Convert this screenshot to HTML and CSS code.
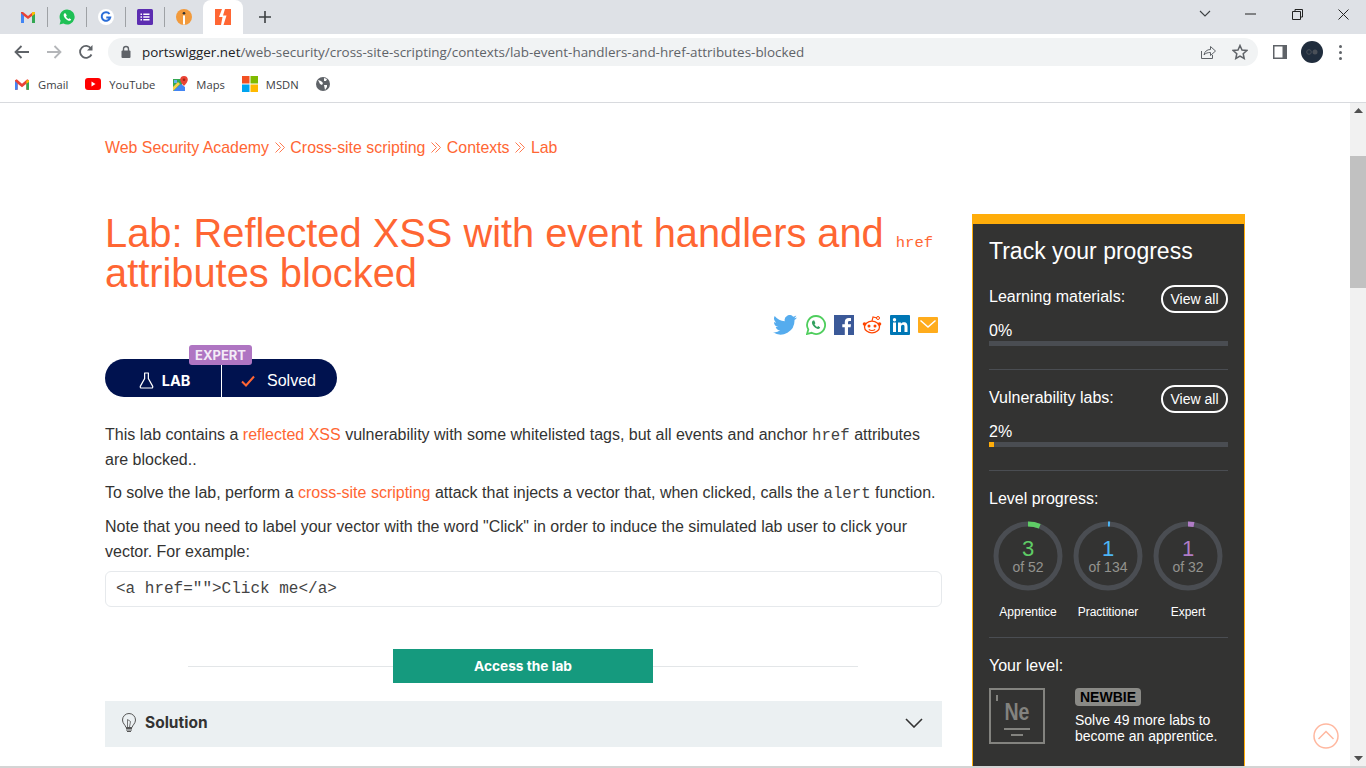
FILE: index.html
```html
<!DOCTYPE html>
<html lang="en">
<head>
	<meta charset="UTF-8">
	<title>Lab: Reflected XSS with event handlers and href attributes blocked</title>
	<link rel="stylesheet" href="styles.css">
</head>
<body>
	<div class="tabstrip">
		<div class="tabs">
			<div class="tab">
				<svg width="16" height="16" viewBox="0 0 16 16"><path d="M1 14V3l2 0 5 4 5-4h2v11h-3V7L8 10 4 7v7z" fill="#ea4335"/><path d="M1 14V4l3 3v7z" fill="#4285f4"/><path d="M15 14V4l-3 3v7z" fill="#34a853"/><path d="M12 3h3v2l-3 2z" fill="#fbbc04"/></svg>
			</div>
			<i class="tab-sep"></i>
			<div class="tab">
				<svg width="16" height="16" viewBox="0 0 16 16"><path d="M8 0.500a7.500 7.500 0 0 0-6.400 11.300L.6 15.500l3.800-1A7.500 7.500 0 1 0 8 .5z" fill="#1fc055"/><path d="M5.600 4.200c-.9.600-1.200 1.900-.6 3.300 1 2.100 2.500 3.500 4.500 4.200 1.300.4 2.300-.1 2.700-1.100l-1.800-1.300-.9.800c-1.100-.5-2-1.400-2.500-2.500l.8-.9-1-2.300z" fill="#fff"/></svg>
			</div>
			<i class="tab-sep"></i>
			<div class="tab">
				<svg width="16" height="16" viewBox="0 0 16 16"><circle cx="8" cy="8" r="8" fill="#fff"/><path d="M11.500 5a4.300 4.300 0 1 0 .7 3.500H8.300" fill="none" stroke="#2a6dd8" stroke-width="2"/></svg>
			</div>
			<i class="tab-sep"></i>
			<div class="tab">
				<svg width="16" height="16" viewBox="0 0 16 16"><rect width="16" height="16" rx="1.500" fill="#5c2db1"/><path d="M3.500 4.500h1.500v1.500H3.500zM3.500 7.300h1.500v1.500H3.500zM3.500 10h1.500v1.500H3.500zM6.300 4.500h6.200v1.500H6.300zM6.300 7.300h6.200v1.500H6.300zM6.300 10h6.200v1.500H6.300z" fill="#fff"/></svg>
			</div>
			<i class="tab-sep"></i>
			<div class="tab">
				<svg width="16" height="16" viewBox="0 0 16 16"><circle cx="8" cy="8" r="8" fill="#f29a3c"/><rect x="7" y="6.500" width="2" height="9" fill="#fff"/><circle cx="8" cy="4.200" r="1.300" fill="#333"/></svg>
			</div>
			<div class="tab tab-active">
				<svg width="16" height="16" viewBox="0 0 16 16"><rect width="16" height="16" fill="#ff6633"/><path d="M7 0 4 8h3.500L6 16h2.500l3-9.500H8L10 0z" fill="#fff"/></svg>
			</div>
			<div class="tab-new">
				<svg width="12" height="12" viewBox="0 0 12 12"><path d="M6 0v12M0 6h12" stroke="#3c4043" stroke-width="1.600"/></svg>
			</div>
		</div>
		<div class="win-btns">
			<svg width="12" height="8" viewBox="0 0 12 8"><path d="M1 1l5 5 5-5" fill="none" stroke="#3c4043" stroke-width="1.100"/></svg>
			<svg class="win-min" width="11" height="2" viewBox="0 0 11 2"><path d="M0 1h11" stroke="#222" stroke-width="1"/></svg>
			<svg class="win-max" width="11" height="11" viewBox="0 0 11 11"><path d="M3 2.500V.5h7.500V8H8.500M.5 2.500H8.500V10.500H.5z" fill="none" stroke="#222"/></svg>
			<svg class="win-close" width="11" height="11" viewBox="0 0 11 11"><path d="M.5.500l10 10M10.500.500l-10 10" stroke="#222"/></svg>
		</div>
	</div>

	<div class="toolbar">
		<svg class="nav-ic" width="16" height="14" viewBox="0 0 16 14"><path d="M15 7H2M7.500 1 1.500 7l6 6" fill="none" stroke="#5f6368" stroke-width="1.800"/></svg>
		<svg class="nav-ic" width="16" height="14" viewBox="0 0 16 14"><path d="M1 7h13M8.500 1l6 6-6 6" fill="none" stroke="#b4b6b9" stroke-width="1.800"/></svg>
		<svg class="nav-ic" width="16" height="16" viewBox="0 0 16 16"><path d="M13.500 10.500A6 6 0 1 1 13 4.500" fill="none" stroke="#5f6368" stroke-width="1.800"/><path d="M14.500 1v5.500H9z" fill="#5f6368"/></svg>
		<div class="omnibox">
			<svg width="12" height="14" viewBox="0 0 12 14"><rect x="1.500" y="5.500" width="9" height="7.500" rx="1" fill="#5f6368"/><path d="M3.500 6V4a2.500 2.500 0 0 1 5 0v2" fill="none" stroke="#5f6368" stroke-width="1.400"/></svg>
			<div class="url"><span class="url-host">portswigger.net</span>/web-security/cross-site-scripting/contexts/lab-event-handlers-and-href-attributes-blocked</div>
			<svg class="omni-share" width="16" height="16" viewBox="0 0 16 16"><path d="M1.500 7v7.500h11V11" fill="none" stroke="#5f6368"/><path d="M4 11c.5-3.500 3-5.500 6.500-5.500V2.500l5 4.500-5 4.500V8.500C8 8.500 5.500 9 4 11z" fill="none" stroke="#5f6368"/></svg>
			<svg class="omni-star" width="16" height="16" viewBox="0 0 16 16"><path d="M8 1.500l2 4.500 4.800.5-3.600 3.200 1 4.800L8 12l-4.200 2.500 1-4.800L1.200 6.500 6 6z" fill="none" stroke="#5f6368" stroke-width="1.500"/></svg>
		</div>
		<svg class="side-ic" width="14" height="14" viewBox="0 0 14 14"><rect width="14" height="14" fill="#5f6368"/><rect x="1.500" y="1.500" width="8" height="11" fill="#fff"/></svg>
		<div class="avatar"><svg width="12" height="6" viewBox="0 0 12 6"><circle cx="3" cy="3" r="2.300" fill="none" stroke="#4a5058"/><circle cx="9" cy="3" r="2.500" fill="#4a5058"/></svg></div>
		<div class="dots"><i></i><i></i><i></i></div>
	</div>

	<div class="bookmarks">
		<div class="bm">
			<svg width="14" height="11" viewBox="0 0 16 12"><path d="M0 12V1l2-1 6 5 6-5 2 1v11h-3V5L8 9 3 5v7z" fill="#ea4335"/><path d="M0 12V2l3 3v7z" fill="#4285f4"/><path d="M16 12V2l-3 3v7z" fill="#34a853"/><path d="M13 1l3 0v2l-3 2z" fill="#fbbc04"/></svg>
			Gmail
		</div>
		<div class="bm">
			<svg width="16" height="12" viewBox="0 0 16 12"><rect width="16" height="12" rx="3" fill="#f00"/><path d="M6.500 3.500v5l4-2.500z" fill="#fff"/></svg>
			YouTube
		</div>
		<div class="bm">
			<svg width="16" height="16" viewBox="0 0 16 16"><path d="M1 3h9v12H1z" fill="#34a853"/><path d="M1 15 9 8l4 3v4z" fill="#4285f4"/><path d="M1 11l5-5 2 2-7 7z" fill="#fbd04a"/><path d="M2 4h3v3H2z" fill="#5fb0f0"/><path d="M12 0a3.800 3.800 0 0 0-3.800 3.800C8.200 6.500 12 10 12 10s3.800-3.500 3.800-6.200A3.800 3.800 0 0 0 12 0z" fill="#ea4335"/><circle cx="12" cy="3.800" r="1.300" fill="#a52714"/></svg>
			Maps
		</div>
		<div class="bm">
			<svg width="16" height="16" viewBox="0 0 16 16"><rect width="7.500" height="7.500" fill="#f25022"/><rect x="8.500" width="7.500" height="7.500" fill="#7fba00"/><rect y="8.500" width="7.500" height="7.500" fill="#00a4ef"/><rect x="8.500" y="8.500" width="7.500" height="7.500" fill="#ffb900"/></svg>
			MSDN
		</div>
		<div class="bm">
			<svg width="14" height="14" viewBox="0 0 14 14"><circle cx="7" cy="7" r="7" fill="#5f6368"/><path d="M2 3l3 1 2 2-1 2-2-1zM8 1l3 1-1 2-2 0zM8 8l3 0 0 2-2 3z" fill="#fff"/></svg>
		</div>
	</div>

	<div class="viewport">
		<div class="page">
			<main class="content">
				<div class="crumbs">
					<a>Web Security Academy</a>
					<svg class="crumb-sep" width="10" height="11" viewBox="0 0 10 11"><path d="M.5.500l5 5-5 5M4.500.500l5 5-5 5" fill="none" stroke="#ff7a50" stroke-width="1"/></svg>
					<a>Cross-site scripting</a>
					<svg class="crumb-sep" width="10" height="11" viewBox="0 0 10 11"><path d="M.5.500l5 5-5 5M4.500.500l5 5-5 5" fill="none" stroke="#ff7a50" stroke-width="1"/></svg>
					<a>Contexts</a>
					<svg class="crumb-sep" width="10" height="11" viewBox="0 0 10 11"><path d="M.5.500l5 5-5 5M4.500.500l5 5-5 5" fill="none" stroke="#ff7a50" stroke-width="1"/></svg>
					<a>Lab</a>
				</div>
				<h1>Lab: Reflected XSS with event handlers and <code>href</code> attributes blocked</h1>
				<div class="share">
					<svg class="share-tw" width="24" height="20" viewBox="0 0 24 20"><path d="M24 2.400a9.800 9.800 0 0 1-2.800.8A5 5 0 0 0 23.300.5a9.800 9.800 0 0 1-3.100 1.200 4.900 4.900 0 0 0-8.400 4.500A14 14 0 0 1 1.700.9a4.900 4.900 0 0 0 1.500 6.600 4.900 4.900 0 0 1-2.200-.6 4.900 4.900 0 0 0 3.900 4.900 4.900 4.900 0 0 1-2.200.1 4.900 4.900 0 0 0 4.600 3.400A9.900 9.900 0 0 1 0 17.300 14 14 0 0 0 21.500 5a10 10 0 0 0 2.500-2.600z" fill="#55acee"/></svg>
					<svg width="20" height="20" viewBox="0 0 20 20"><path d="M10 1a9 9 0 0 0-7.700 13.500L1 19l4.600-1.200A9 9 0 1 0 10 1z" fill="none" stroke="#4fce5d" stroke-width="1.800"/><path d="M7 5.500c-1 .7-1.400 2.100-.7 3.700 1.100 2.300 2.700 3.800 4.900 4.500 1.500.5 2.600-.1 3-1.300l-2-1.400-1 .9c-1.200-.5-2.200-1.500-2.700-2.700l.9-1-1.100-2.600z" fill="#31a05f"/></svg>
					<svg width="20" height="20" viewBox="0 0 20 20"><rect width="20" height="20" fill="#3b5998"/><path d="M14 20v-7.700h2.600l.4-3h-3V7.400c0-.9.300-1.500 1.500-1.500H17V3.200c-.3 0-1.200-.1-2.300-.1-2.300 0-3.900 1.400-3.900 4v2.200H8.300v3h2.500V20z" fill="#fff"/></svg>
					<svg width="20" height="20" viewBox="0 0 20 20"><ellipse cx="10" cy="12" rx="7.500" ry="5.800" fill="none" stroke="#ff4500" stroke-width="1.300"/><circle cx="7" cy="11" r="1.500" fill="#ff4500"/><circle cx="13" cy="11" r="1.500" fill="#ff4500"/><path d="M6.800 14.500c2 1.200 4.400 1.200 6.400 0M10 6l1-4 4 1" fill="none" stroke="#ff4500" stroke-width="1.100"/><circle cx="16" cy="3" r="1.500" fill="none" stroke="#ff4500"/><circle cx="2.500" cy="9" r="1.800" fill="#ff4500"/><circle cx="17.500" cy="9" r="1.800" fill="#ff4500"/></svg>
					<svg width="20" height="20" viewBox="0 0 20 20"><rect width="20" height="20" rx="1" fill="#0077b5"/><path d="M3 7.500h3V17H3zM4.500 3a1.700 1.700 0 1 1 0 3.400 1.700 1.700 0 0 1 0-3.400zM8 7.500h2.900v1.300c.5-.9 1.600-1.600 3-1.600 3 0 3.600 2 3.600 4.500V17h-3v-4.700c0-1.200 0-2.500-1.600-2.500s-1.900 1.200-1.900 2.400V17H8z" fill="#fff"/></svg>
					<svg width="20" height="16" viewBox="0 0 20 16"><rect width="20" height="16" rx="1" fill="#ffac1c"/><path d="M2.500 3.500 10 10l7.500-6.500" fill="none" stroke="#fff" stroke-width="1.500"/></svg>
				</div>
				<div class="lab-pill">
					<span class="lab-level">EXPERT</span>
					<div class="lab-half lab-left">
						<svg width="15" height="17" viewBox="0 0 16 18"><path d="M5.500 1h5M6 1v6L1.500 15c-.5 1 0 2 1 2h11c1 0 1.500-1 1-2L10 7V1" fill="none" stroke="#fff" stroke-width="1.300"/></svg>
						<b>LAB</b>
					</div>
					<div class="lab-half lab-right">
						<svg width="14" height="12" viewBox="0 0 14 12"><path d="M1 6.500 5 10.500 13 1.500" fill="none" stroke="#ff6633" stroke-width="2"/></svg>
						<span>Solved</span>
					</div>
				</div>
				<p>This lab contains a <a>reflected XSS</a> vulnerability with some whitelisted tags, but all events and anchor <code>href</code> attributes are blocked..</p>
				<p>To solve the lab, perform a <a>cross-site scripting</a> attack that injects a vector that, when clicked, calls the <code>alert</code> function.</p>
				<p>Note that you need to label your vector with the word "Click" in order to induce the simulated lab user to click your vector. For example:</p>
				<div class="code-block">&lt;a href=""&gt;Click me&lt;/a&gt;</div>
				<div class="access-row"><a class="access-btn">Access the lab</a></div>
				<div class="solution">
					<svg width="16" height="20" viewBox="0 0 16 20"><path d="M5 14.500C4.500 12 1.500 10.500 1.500 7a6.500 6.500 0 0 1 13 0c0 3.500-3 5-3.500 7.500z" fill="none" stroke="#555" stroke-width="1"/><path d="M6.500 14V6.500l3 2L8.500 14" fill="none" stroke="#555" stroke-width=".8"/><path d="M5 15.500h6M5 17h6M6 18.500h4" stroke="#555" stroke-width="1.100"/></svg>
					<b>Solution</b>
					<svg class="solution-arrow" width="18" height="10" viewBox="0 0 18 10"><path d="M1 1l8 8 8-8" fill="none" stroke="#333" stroke-width="1.600"/></svg>
				</div>
			</main>

			<aside class="progress">
				<h2>Track your progress</h2>
				<div class="prog-head">
					<span>Learning materials:</span><a class="view-all">View all</a>
				</div>
				<div class="pct">0%</div>
				<div class="bar"></div>
				<div class="prog-head prog-section">
					<span>Vulnerability labs:</span><a class="view-all">View all</a>
				</div>
				<div class="pct">2%</div>
				<div class="bar"><i class="bar-fill"></i></div>
				<div class="level-sec">
					<div class="sec-title">Level progress:</div>
					<div class="rings">
						<div class="ring-item">
							<div class="ring">
								<svg width="70" height="70" viewBox="0 0 70 70"><circle class="ring-bg" cx="35" cy="35" r="32"/><circle class="ring-val" cx="35" cy="35" r="32" stroke="#5fcc66" stroke-dasharray="12 201"/></svg>
								<div class="ring-txt"><b class="c-green">3</b><span>of 52</span></div>
							</div>
							<label>Apprentice</label>
						</div>
						<div class="ring-item">
							<div class="ring">
								<svg width="70" height="70" viewBox="0 0 70 70"><circle class="ring-bg" cx="35" cy="35" r="32"/><circle class="ring-val" cx="35" cy="35" r="32" stroke="#4db5f5" stroke-dasharray="2 201"/></svg>
								<div class="ring-txt"><b class="c-blue">1</b><span>of 134</span></div>
							</div>
							<label>Practitioner</label>
						</div>
						<div class="ring-item">
							<div class="ring">
								<svg width="70" height="70" viewBox="0 0 70 70"><circle class="ring-bg" cx="35" cy="35" r="32"/><circle class="ring-val" cx="35" cy="35" r="32" stroke="#b07cc6" stroke-dasharray="6 201"/></svg>
								<div class="ring-txt"><b class="c-purple">1</b><span>of 32</span></div>
							</div>
							<label>Expert</label>
						</div>
					</div>
				</div>
				<div class="your-level">
					<div class="sec-title">Your level:</div>
					<div class="level-row">
						<div class="element"><i class="el-tick"></i><b>Ne</b><i class="el-l1"></i><i class="el-l2"></i></div>
						<div class="level-info">
							<span class="newbie">NEWBIE</span>
							<div class="level-txt">Solve 49 more labs to become an apprentice.</div>
						</div>
					</div>
				</div>
			</aside>
		</div>

		<div class="scrollbar">
			<svg width="9" height="5" viewBox="0 0 9 5"><path d="M0 5l4.500-5L9 5z" fill="#505050"/></svg>
			<div class="scroll-track"><div class="scroll-thumb"></div></div>
			<svg width="9" height="5" viewBox="0 0 9 5"><path d="M0 0l4.500 5L9 0z" fill="#505050"/></svg>
		</div>
		<svg class="to-top" width="26" height="26" viewBox="0 0 26 26"><circle cx="13" cy="13" r="12" fill="#fff" stroke="#ffb8a0" stroke-width="1.500"/><path d="M5.500 16 13 8.500 20.500 16" fill="none" stroke="#ffb8a0" stroke-width="1.500"/></svg>
	</div>
</body>
</html>
```

FILE: styles.css
```css
* {
	margin: 0;
	padding: 0;
	box-sizing: border-box;
}
html, body {
	height: 100%;
	overflow: hidden;
}
body {
	font-family: "Liberation Sans", Arial, sans-serif;
	color: #333332;
	background: #fff;
	display: flex;
	flex-direction: column;
}

/* browser chrome */
.tabstrip {
	height: 34px;
	background: #dee1e6;
	display: flex;
	justify-content: space-between;
	flex: none;
}
.tabs {
	display: flex;
	align-items: center;
	padding-left: 20px;
}
.tab {
	width: 16px;
	height: 16px;
	display: flex;
}
.tab-sep {
	width: 1px;
	height: 20px;
	background: #9ea1a5;
	margin: 0 11px;
}
.tab-active {
	width: 40px;
	height: 34px;
	background: #fff;
	border-radius: 8px 8px 0 0;
	align-items: center;
	justify-content: center;
	margin-left: 11px;
}
.tab-new {
	width: 12px;
	height: 12px;
	margin-left: 16px;
	display: flex;
}
.win-btns {
	display: flex;
	align-items: center;
	height: 28px;
	padding-right: 17px;
}
.win-min { margin-left: 34px; }
.win-max { margin-left: 36px; }
.win-close { margin-left: 35px; }

.toolbar {
	height: 36px;
	background: #fff;
	display: flex;
	align-items: center;
	padding: 0 0 0 14px;
	flex: none;
}
.toolbar .nav-ic { margin-right: 16px; }
.toolbar .nav-ic:nth-child(3) { margin-right: 14px; }
.omnibox {
	width: 1150px;
	height: 28px;
	background: #f1f3f4;
	border-radius: 14px;
	display: flex;
	align-items: center;
	padding-left: 12px;
}
.url {
	font-family: "Open Sans", "Noto Sans", sans-serif;
	font-size: 13.430px;
	color: #5f6368;
	margin-left: 10px;
	white-space: nowrap;
	flex: 1;
}
.url-host { color: #202124; }
.omni-share { margin-right: 16px; }
.omni-star { margin-right: 10px; }
.side-ic { margin-left: 15px; }
.avatar {
	width: 22px;
	height: 22px;
	border-radius: 50%;
	background: #202d3d;
	margin-left: 14px;
	display: flex;
	align-items: center;
	justify-content: center;
}
.dots {
	margin-left: 16px;
	display: flex;
	flex-direction: column;
	gap: 3px;
}
.dots i {
	width: 3px;
	height: 3px;
	border-radius: 50%;
	background: #5f6368;
}

.bookmarks {
	height: 33px;
	background: #fff;
	border-bottom: 1px solid #d8dade;
	display: flex;
	align-items: center;
	padding: 0 0 4px 15px;
	gap: 17px;
	flex: none;
	font-family: "Open Sans", "Noto Sans", sans-serif;
	font-size: 11.200px;
	color: #3c4043;
}
.bm {
	display: flex;
	align-items: center;
	gap: 8px;
}
.bm:first-child { gap: 9px; }

/* page */
.viewport {
	flex: 1;
	position: relative;
	display: flex;
	overflow: hidden;
	min-height: 0;
	border-bottom: 2px solid #d4d4d4;
}
.page {
	width: 1350px;
	display: flex;
	padding-left: 105px;
	align-items: flex-start;
	overflow: hidden;
}
.content {
	width: 837px;
	flex: none;
	font-size: 16px;
}
.crumbs {
	margin-top: 35px;
	height: 20px;
	line-height: 20px;
	font-size: 15.900px;
	color: #ff6633;
	white-space: nowrap;
	display: flex;
	align-items: center;
}
.crumb-sep {
	margin: -2px 5.700px 0;
}
h1 {
	font-size: 39.800px;
	font-weight: 400;
	line-height: 40px;
	color: #ff6633;
	margin-top: 55px;
}
h1 code {
	font-family: "Liberation Mono", monospace;
	font-size: 15.500px;
	line-height: 1;
	margin-left: 1px;
}
.share {
	display: flex;
	justify-content: flex-end;
	align-items: center;
	gap: 8px;
	margin-top: 21px;
	height: 22px;
	margin-right: 4px;
}
.share-tw { margin-right: 1px; }
.lab-pill {
	position: relative;
	width: 232px;
	height: 38px;
	margin-top: 23px;
	background: #00124f;
	border-radius: 20px;
	display: flex;
	color: #fff;
}
.lab-half {
	display: flex;
	align-items: center;
	justify-content: center;
}
.lab-left {
	width: 117px;
	gap: 8px;
	border-right: 1px solid #fff;
	font-family: Inter, sans-serif;
	font-size: 14.500px;
	padding: 5px 0 0 3px;
}
.lab-right {
	width: 115px;
	gap: 12px;
	font-size: 16px;
	padding: 6px 2px 0 0;
}
.lab-level {
	position: absolute;
	left: 84px;
	top: -14px;
	width: 63px;
	height: 20px;
	line-height: 20px;
	background: #af75c2;
	border-radius: 3px;
	text-align: center;
	font-size: 13px;
	font-weight: 700;
	font-family: Inter, sans-serif;
	color: #f4ecf7;
}
.content p {
	line-height: 25px;
	margin-bottom: 8px;
}
.lab-pill + p { margin-top: 25px; }
.lab-pill + p + p { margin-bottom: 9px; }
.content p a { color: #ff6633; }
.content p code {
	font-family: "Liberation Mono", monospace;
	font-size: 15.700px;
	line-height: 1;
	color: #444;
}
.code-block {
	height: 36px;
	line-height: 34px;
	border: 1px solid #e6e9ec;
	border-radius: 6px;
	padding-left: 10px;
	font-family: "Liberation Mono", monospace;
	font-size: 16px;
	color: #444;
	margin-top: -1px;
}
.access-row {
	margin: 42px 84px 0 83px;
	height: 34px;
	display: flex;
	align-items: center;
	justify-content: center;
	background: linear-gradient(#e3e6e8, #e3e6e8) center / 100% 1px no-repeat;
}
.access-btn {
	width: 260px;
	height: 34px;
	line-height: 34px;
	background: #159a7e;
	color: #fff;
	text-align: center;
	font-size: 13.700px;
	font-weight: 700;
	font-family: Inter, sans-serif;
}
.solution {
	margin-top: 18px;
	height: 46px;
	background: #ebf0f2;
	display: flex;
	align-items: center;
	padding: 0 0 3px 16px;
	font-family: Inter, sans-serif;
	font-size: 15.500px;
}
.solution b { margin-left: 8px; }
.solution-arrow { margin-left: auto; margin-right: 19px; }

/* progress card */
.progress {
	width: 273px;
	height: 560px;
	margin-left: 30px;
	margin-top: 111px;
	flex: none;
	background: #333332;
	border: 1px solid #ffad0a;
	border-top: 10px solid #ffad0a;
	padding: 0 16px;
	color: #fff;
}
.progress h2 {
	font-size: 23px;
	font-weight: 400;
	margin-top: 13px;
	line-height: 28px;
}
.prog-head {
	display: flex;
	justify-content: space-between;
	align-items: center;
	margin-top: 20px;
	height: 28px;
	font-size: 16px;
}
.prog-head span { margin-bottom: 4px; }
.view-all {
	width: 67px;
	height: 28px;
	line-height: 25px;
	border: 2px solid #fff;
	border-radius: 14px;
	text-align: center;
	font-size: 14px;
}
.pct {
	margin-top: 9px;
	line-height: 18px;
	font-size: 16px;
}
.bar {
	height: 5px;
	margin-top: 1px;
	background: #4a4d52;
	display: flex;
}
.bar-fill {
	width: 5px;
	background: #ffad0a;
}
.prog-section {
	border-top: 1px solid #4a4d52;
	margin-top: 23px;
	padding-top: 15px;
	height: 44px;
}
.prog-section span { margin-bottom: 2px; }
.prog-section + .pct { margin-top: 10px; }
.level-sec {
	border-top: 1px solid #4a4d52;
	margin-top: 23px;
	padding-top: 18px;
}
.sec-title {
	font-size: 16px;
	line-height: 20px;
}
.rings {
	display: flex;
	gap: 10px;
	margin-top: 12px;
	padding-left: 4px;
}
.ring-item {
	width: 70px;
	text-align: center;
	font-size: 12px;
}
.ring {
	position: relative;
	width: 70px;
	height: 70px;
}
.ring svg {
	display: block;
	transform: rotate(-90deg);
}
.ring-bg {
	fill: none;
	stroke: #4a4d52;
	stroke-width: 5;
}
.ring-val {
	fill: none;
	stroke-width: 5;
}
.ring-txt {
	position: absolute;
	left: 0;
	right: 0;
	top: 18px;
	display: flex;
	flex-direction: column;
	align-items: center;
}
.ring-txt b {
	font-size: 22px;
	font-weight: 400;
	line-height: 20px;
}
.ring-txt span {
	font-size: 14px;
	line-height: 17px;
	color: #93938f;
}
.c-green { color: #5fcc66; }
.c-blue { color: #4db5f5; }
.c-purple { color: #b07cc6; }
.ring-item label {
	display: block;
	margin: 14px -10px 0;
	line-height: 14px;
}
.your-level {
	border-top: 1px solid #4a4d52;
	margin-top: 18px;
	padding-top: 18px;
}
.level-row {
	display: flex;
	margin-top: 12px;
}
.element {
	position: relative;
	width: 56px;
	height: 56px;
	border: 2px solid #83837f;
	flex: none;
	color: #83837f;
	text-align: center;
}
.element b {
	display: block;
	font-size: 23px;
	line-height: 24px;
	margin-top: 10px;
	transform: scaleX(.85);
}
.el-tick {
	position: absolute;
	left: 5px;
	top: 5px;
	width: 2px;
	height: 6px;
	background: #83837f;
}
.el-l1 {
	position: absolute;
	left: 13px;
	top: 38px;
	width: 26px;
	height: 2px;
	background: #83837f;
}
.el-l2 {
	position: absolute;
	left: 20px;
	top: 44px;
	width: 12px;
	height: 2px;
	background: #83837f;
}
.level-info {
	margin-left: 30px;
}
.newbie {
	display: block;
	width: 66px;
	height: 18px;
	line-height: 18px;
	background: #8a8a86;
	border-radius: 4px;
	color: #000;
	text-align: center;
	font-size: 14px;
	font-weight: 700;
}
.level-txt {
	margin-top: 6px;
	font-size: 14px;
	line-height: 16px;
	width: 150px;
}

/* scrollbar */
.scrollbar {
	width: 16px;
	background: #f1f1f1;
	display: flex;
	flex-direction: column;
	align-items: center;
	padding: 5px 0;
	flex: none;
}
.scroll-track {
	flex: 1;
	width: 100%;
	padding-top: 43px;
}
.scroll-thumb {
	height: 132px;
	background: #c1c1c1;
}
.to-top {
	position: absolute;
	left: 1313px;
	top: 620px;
}
```
